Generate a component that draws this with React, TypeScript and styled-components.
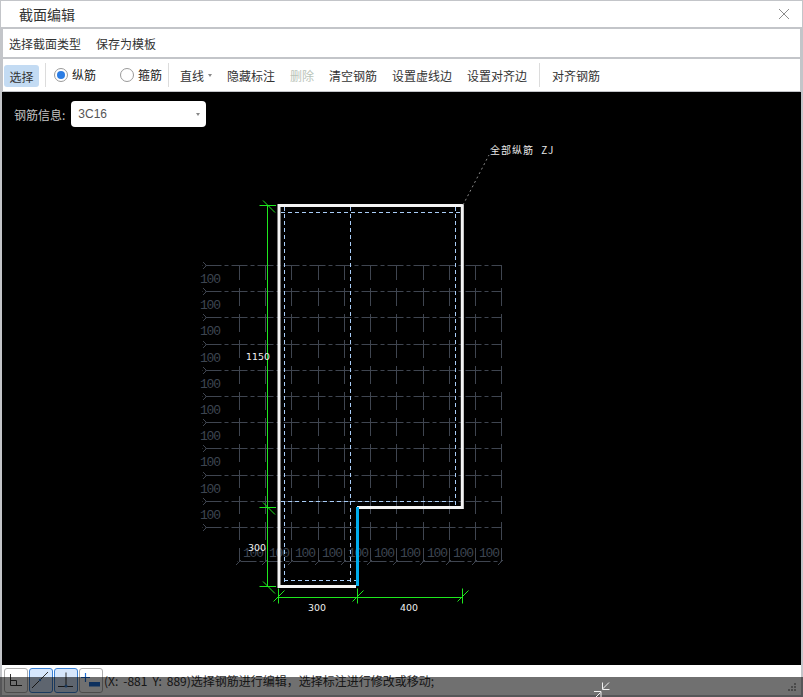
import styled, { createGlobalStyle } from "styled-components"

const GRID_X = Array.from({ length: 11 }, (_, i) => Math.floor(239.5 + i * 26.24) + 0.5)
const GRID_Y = Array.from({ length: 11 }, (_, i) => Math.floor(265.5 + i * 26.2) + 0.5)
const GREEN = "#1ee81e"

const GlobalStyle = createGlobalStyle`
  html, body {
    margin: 0;
    padding: 0;
    background: #c3c5c9;
  }
  body {
    font-family: "Noto Sans CJK SC", "Liberation Sans", sans-serif;
    font-size: 12px;
    color: #333;
  }
`

function Tick({ x, y, horizontal }: { x: number; y: number; horizontal?: boolean }) {
  return (
    <g stroke={GREEN} strokeWidth="1">
      {horizontal ? (
        <line x1={x - 8.5} y1={y} x2={x + 8} y2={y} />
      ) : (
        <line x1={x} y1={y - 8} x2={x} y2={y + 7} />
      )}
      {horizontal ? (
        <line x1={x - 5} y1={y - 5} x2={x + 7} y2={y + 7} />
      ) : (
        <line x1={x - 5} y1={y + 5} x2={x + 6} y2={y - 6} />
      )}
    </g>
  )
}

function SectionDrawing() {
  return (
    <Drawing viewBox="2 92 799 573" width="799" height="573">
      {/* reference grid */}
      <g stroke="#3f4550" strokeWidth="1" fill="none" strokeDasharray="16 3 4 3" strokeDashoffset="22.5">
        {GRID_Y.map((y) => (
          <line key={y} x1="202" y1={y} x2="502" y2={y} />
        ))}
        <line x1="237" y1="561.5" x2="502" y2="561.5" />
      </g>
      <g stroke="#3f4550" strokeWidth="1" fill="none" strokeDasharray="13 8 5 0" strokeDashoffset="24">
        {GRID_X.map((x) => (
          <line key={x} x1={x} y1="265" x2={x} y2="561" />
        ))}
      </g>
      <g stroke="#3f4550" strokeWidth="1">
        {GRID_Y.map((y) => (
          <path key={y} d={`M203 ${y - 3.5}L206.5 ${y}L203 ${y + 3.5}`} fill="none" />
        ))}
        {GRID_X.map((x) => (
          <line key={x} x1={x - 3.5} y1="565" x2={x + 1.5} y2="560" />
        ))}
      </g>
      <GridLabels>
        {GRID_Y.slice(0, 10).map((y) => (
          <text key={y} x="200" y={y + 17}>
            100
          </text>
        ))}
        {GRID_X.slice(0, 10).map((x) => (
          <text key={x} x={x + 3.5} y="557">
            100
          </text>
        ))}
      </GridLabels>

      {/* inner bars */}
      <g stroke="#a9cdf7" strokeWidth="1" strokeDasharray="4 3" fill="none">
        <line x1="284.5" y1="207" x2="284.5" y2="585" />
        <line x1="350.5" y1="207" x2="350.5" y2="585" />
        <line x1="455.5" y1="207" x2="455.5" y2="506" />
        <line x1="281" y1="212.5" x2="461" y2="212.5" />
        <line x1="281" y1="501.5" x2="456" y2="501.5" />
        <line x1="284" y1="580.5" x2="356" y2="580.5" />
      </g>

      {/* section outline */}
      <path
        d="M357 507.5H462.3V205.4H279V586.5H356"
        fill="none"
        stroke="#f4f4f4"
        strokeWidth="3"
      />
      <line x1="357.5" y1="507" x2="357.5" y2="586" stroke="#00aeef" strokeWidth="3" />

      {/* dimensions */}
      <line x1="267.5" y1="205" x2="267.5" y2="586" stroke={GREEN} />
      <line x1="278" y1="597.5" x2="463" y2="597.5" stroke={GREEN} />
      <Tick x={268} y={205.5} horizontal />
      <Tick x={268} y={507.5} horizontal />
      <Tick x={268} y={586.5} horizontal />
      <Tick x={278.5} y={596.5} />
      <Tick x={357.5} y={596.5} />
      <Tick x={462.5} y={596.5} />
      <DimLabels>
        <text x="246" y="360">
          1150
        </text>
        <text x="248" y="551">
          300
        </text>
        <text x="308" y="611">
          300
        </text>
        <text x="400" y="611">
          400
        </text>
      </DimLabels>

      {/* leader */}
      <line x1="463" y1="205" x2="489" y2="155" stroke="#8a8a8a" strokeDasharray="2 3" />
      <LeaderLabel x="490" y="154">
        全部纵筋 ZJ
      </LeaderLabel>
    </Drawing>
  )
}

export default function App() {
  return (
    <Window>
      <GlobalStyle />
      <TitleBar>
        <Title>截面编辑</Title>
        <CloseIcon width="12" height="12" viewBox="0 0 12 12">
          <path d="M1 1L11 11M11 1L1 11" stroke="#8c8c8c" strokeWidth="1" fill="none" />
        </CloseIcon>
      </TitleBar>
      <MenuBar>
        <MenuItem>选择截面类型</MenuItem>
        <MenuItem>保存为模板</MenuItem>
      </MenuBar>
      <Toolbar>
        <SelectButton>选择</SelectButton>
        <Separator $right={8} />
        <RadioLabel $width={66}>
          <RadioCircle $checked />
          纵筋
        </RadioLabel>
        <RadioLabel $width={42}>
          <RadioCircle />
          箍筋
        </RadioLabel>
        <Separator $right={11} />
        <ToolGroup>
          <ToolItem>
            直线
            <Caret />
          </ToolItem>
          <ToolItem>隐藏标注</ToolItem>
          <ToolItem $disabled>删除</ToolItem>
          <ToolItem>清空钢筋</ToolItem>
          <ToolItem>设置虚线边</ToolItem>
          <ToolItem>设置对齐边</ToolItem>
        </ToolGroup>
        <Separator $right={12} />
        <ToolItem>对齐钢筋</ToolItem>
      </Toolbar>
      <Canvas>
        <SectionDrawing />
        <InfoRow>
          <InfoLabel>钢筋信息:</InfoLabel>
          <InfoSelect>
            3C16
            <Caret />
          </InfoSelect>
        </InfoRow>
      </Canvas>
      <StatusBar>
        <SnapGroup>
          <SnapButton>
            <svg width="24" height="24" viewBox="0 0 24 24">
              <path d="M6.5 6V17.5H18M6.5 12.5H12.5V17.5" fill="none" stroke="#333" />
            </svg>
          </SnapButton>
          <SnapButton $active>
            <svg width="24" height="24" viewBox="0 0 24 24">
              <path d="M3 20L19 4" fill="none" stroke="#333" />
              <circle cx="11" cy="12" r="1.2" fill="#3b7fd0" />
            </svg>
          </SnapButton>
          <SnapButton $active>
            <svg width="24" height="24" viewBox="0 0 24 24">
              <path d="M12 4.5V18M4 18.5H19" fill="none" stroke="#333" />
              <circle cx="12" cy="18" r="1.5" fill="#3b7fd0" />
            </svg>
          </SnapButton>
          <SnapButton>
            <svg width="24" height="24" viewBox="0 0 24 24">
              <path d="M6.5 5V14M2 9.5H11" fill="none" stroke="#1f6fd6" strokeWidth="1.2" />
              <rect x="10" y="14" width="11" height="4.5" fill="#1f6fd6" />
            </svg>
          </SnapButton>
        </SnapGroup>
        <StatusText>(X: -881 Y: 889)选择钢筋进行编辑，选择标注进行修改或移动;</StatusText>
      </StatusBar>
      <Shade>
        <CollapseIcon width="16" height="17" viewBox="0 0 16 17">
          <path
            d="M15 0.5L8.5 7M8.5 0.5V7.5H15.5M0 17L6.5 10.5M0 9.5H7V17"
            fill="none"
            stroke="#f0f0f0"
            strokeWidth="1"
          />
        </CollapseIcon>
        <ResizeGrip width="9" height="9" viewBox="0 0 9 9">
          <path d="M6 0h2v2H6zM3 3h2v2H3zM6 3h2v2H6zM0 6h2v2H0zM3 6h2v2H3zM6 6h2v2H6z" fill="#4a4a4a" />
        </ResizeGrip>
      </Shade>
    </Window>
  )
}

const Window = styled.div`
  position: relative;
  display: flex;
  flex-direction: column;
  width: 803px;
  height: 697px;
  box-sizing: border-box;
  padding-top: 1px;
  overflow: hidden;
  background: #c3c5c9;
`

const TitleBar = styled.div`
  display: flex;
  align-items: center;
  justify-content: space-between;
  height: 26px;
  margin: 0 1px 2px 1px;
  padding: 0 12px 0 18px;
  background: #fff;
`

const Title = styled.div`
  font-size: 14px;
  line-height: 26px;
  color: #333;
`

const CloseIcon = styled.svg`
  display: block;
`

const MenuBar = styled.div`
  display: flex;
  align-items: center;
  gap: 15px;
  height: 28px;
  margin: 0 3px 2px 3px;
  padding-left: 6px;
  background: #fff;
`

const MenuItem = styled.span`
  font-size: 12px;
  color: #333;
`

const Toolbar = styled.div`
  display: flex;
  align-items: center;
  height: 32px;
  margin: 0 3px 1px 3px;
  padding-left: 1px;
  background: #fff;
`

const SelectButton = styled.button`
  width: 35px;
  height: 22px;
  margin: 2px 0 0 0;
  padding: 0;
  border: none;
  border-radius: 3px;
  background: #c3dbf3;
  font: inherit;
  color: #333;
`

const Separator = styled.div<{ $right: number }>`
  width: 1px;
  height: 24px;
  margin: 0 ${(p) => p.$right}px 0 6px;
  background: #dcdcdc;
`

const RadioLabel = styled.label<{ $width: number }>`
  display: flex;
  align-items: center;
  gap: 4px;
  width: ${(p) => p.$width}px;
  margin-bottom: 1px;
  white-space: nowrap;
  color: #222;
`

const RadioCircle = styled.span<{ $checked?: boolean }>`
  display: flex;
  flex: none;
  align-items: center;
  justify-content: center;
  box-sizing: border-box;
  width: 14px;
  height: 14px;
  border: 1px solid #9a9a9a;
  border-radius: 50%;
  background: #fff;

  &::after {
    content: "";
    display: ${(p) => (p.$checked ? "block" : "none")};
    width: 8px;
    height: 8px;
    border-radius: 50%;
    background: #2b7de4;
  }
`

const ToolGroup = styled.div`
  display: flex;
  align-items: center;
  gap: 15px;
  margin-right: 6px;
`

const ToolItem = styled.span<{ $disabled?: boolean }>`
  display: flex;
  align-items: center;
  margin-top: 1px;
  color: ${(p) => (p.$disabled ? "#b9c4b9" : "#333")};
  white-space: nowrap;
`

const Caret = styled.i`
  display: block;
  width: 0;
  height: 0;
  margin-left: 4px;
  border-top: 3px solid #888;
  border-left: 2.5px solid transparent;
  border-right: 2.5px solid transparent;
`

const Canvas = styled.div`
  position: relative;
  flex: none;
  height: 573px;
  margin: 0 2px;
  padding: 9px 0 0 12px;
  box-sizing: border-box;
  background: #000;
`

const Drawing = styled.svg`
  position: absolute;
  top: 0;
  left: 0;
  display: block;
`

const GridLabels = styled.g`
  fill: #3d4551;
  font-family: "Liberation Mono", monospace;
  font-size: 13px;
  letter-spacing: -1.2px;
`

const DimLabels = styled.g`
  fill: #f2f2f2;
  font-family: "DejaVu Sans", sans-serif;
  font-size: 9.4px;
`

const LeaderLabel = styled.text`
  fill: #e8e8e8;
  font-family: "Noto Sans CJK SC", sans-serif;
  font-size: 10px;
  letter-spacing: 1px;
  word-spacing: 4px;
`

const InfoRow = styled.div`
  position: relative;
  display: flex;
  align-items: center;
  gap: 6px;
`

const InfoLabel = styled.span`
  color: #c4c4c4;
`

const InfoSelect = styled.div`
  display: flex;
  align-items: center;
  justify-content: space-between;
  box-sizing: border-box;
  width: 135px;
  height: 26px;
  padding: 0 6px 0 7px;
  border-radius: 4px;
  background: #fff;
  font-family: "Liberation Sans", sans-serif;
  font-size: 12px;
  color: #555;
`

const StatusBar = styled.div`
  display: flex;
  align-items: center;
  height: 30px;
  margin: 0 2px;
  padding: 0 0 0 2px;
  background: #fff;
`

const SnapGroup = styled.div`
  display: flex;
  gap: 1px;
`

const SnapButton = styled.div<{ $active?: boolean }>`
  box-sizing: border-box;
  width: 24px;
  height: 25px;
  overflow: hidden;
  border: 1px solid ${(p) => (p.$active ? "#3b82d6" : "#adadad")};
  border-radius: 3px;
  background: ${(p) => (p.$active ? "#d7e7fc" : "#fff")};

  svg {
    display: block;
    margin: -1px;
  }
`

const StatusText = styled.span`
  margin: 0 0 0 1px;
  color: #333;
  white-space: nowrap;
  word-spacing: 2.3px;
`

const Shade = styled.div`
  position: absolute;
  left: 0;
  right: 0;
  bottom: 0;
  display: flex;
  height: 20px;
  padding: 3px 6px 0 594px;
  box-sizing: border-box;
  background: rgba(0, 0, 0, 0.56);
  pointer-events: none;
`

const CollapseIcon = styled.svg`
  display: block;
  flex: none;
  margin-top: 2px;
`

const ResizeGrip = styled.svg`
  display: block;
  flex: none;
  margin: 3px 0 0 auto;
`
